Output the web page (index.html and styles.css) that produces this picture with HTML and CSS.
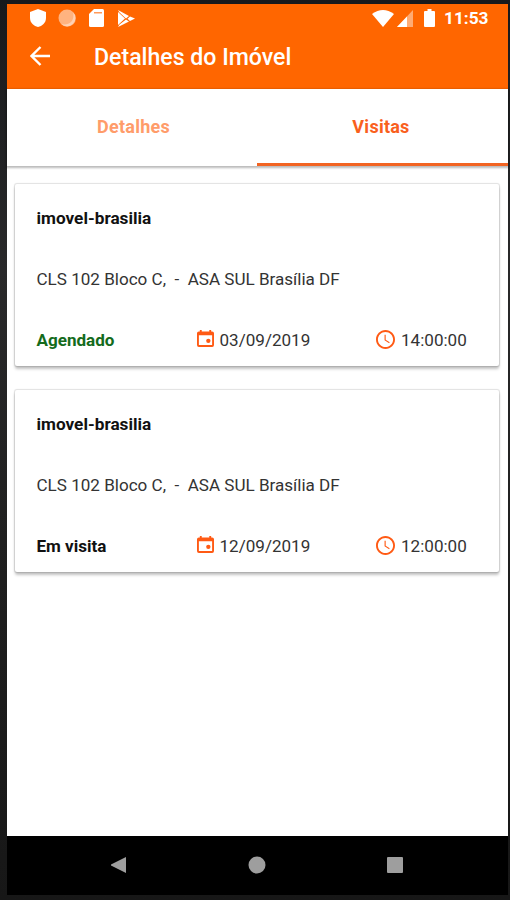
FILE: index.html
```html
<!DOCTYPE html>
<html lang="pt-BR">
<head>
<meta charset="utf-8">
<title>Detalhes do Imóvel</title>
<link rel="stylesheet" href="styles.css">
</head>
<body>
<svg class="symbols" width="0" height="0" aria-hidden="true">
  <symbol id="calendar" viewBox="0 0 18 18" preserveAspectRatio="none"><path fill-rule="evenodd" d="M3 0h2v1.500h8V0h2v1.500h1q2 0 2 2V16q0 2-2 2H2q-2 0-2-2V3.500q0-2 2-2h1zM2 5.500V16h14V5.500z"/><circle cx="12" cy="11.500" r="2.300"/></symbol>
  <symbol id="clock" viewBox="2 2 20 20"><path d="M12 2C6.500 2 2 6.500 2 12s4.500 10 10 10 10-4.500 10-10S17.500 2 12 2zm0 18c-4.400 0-8-3.600-8-8s3.600-8 8-8 8 3.600 8 8-3.600 8-8 8zm.2-13H11v5.800l4.800 3.100.6-1.100-4.200-2.600V7z"/></symbol>
</svg>
<div class="screen">
  <header class="header">
    <div class="status">
      <svg class="shield" width="16" height="18" viewBox="0 0 16 18"><path d="M8 0l8 3v6c0 5-4 8-8 9-4-1-8-4-8-9V3z"/></svg>
      <svg class="sync" width="18" height="18" viewBox="0 0 18 18"><circle cx="9" cy="9" r="8.500" opacity=".5"/><path d="M15 3a8.500 8.500 0 1 1-12 12c9 2 14-4 12-12z" opacity=".4"/></svg>
      <svg class="card-icon" width="15" height="18" viewBox="0 0 15 18"><path d="M5 0h8.500Q15 0 15 1.500v15q0 1.500-1.500 1.500h-12Q0 18 0 16.500V5z"/><path class="contacts" d="M5 3h8v1.500H5z"/></svg>
      <svg class="play" width="17" height="17" viewBox="0 0 17 17"><path d="M0 0l11 6-3 2.500L1.500 2.500zM0 2l7 6.500L0 15zM1.500 14.500L8 9.500l3 2L0 17zM12 6.500l5 2-5 2.500-2.500-2.200z"/></svg>
      <svg class="wifi" width="22" height="17" viewBox="0 0 22 17"><path d="M0 4Q11-4 22 4L11 17z"/></svg>
      <svg class="signal" width="16" height="17" viewBox="0 0 16 17"><path d="M0 17L16 0v17z" opacity=".45"/><path d="M0 17L10 6.400V17z"/></svg>
      <svg class="battery" width="11" height="18" viewBox="0 0 11 18"><path d="M3.500 0h4v2H10q1 0 1 1v14q0 1-1 1H1q-1 0-1-1V3q0-1 1-1h2.500z"/></svg>
      <span class="time">11:53</span>
    </div>
    <div class="toolbar">
      <svg class="back" width="20" height="20" viewBox="0 0 20 20"><path d="M10.500 1L1.500 10l9 9M1.500 10H20"/></svg>
      <h1 class="title">Detalhes do Imóvel</h1>
    </div>
  </header>
  <nav class="tabs">
    <span class="tab">Detalhes</span>
    <span class="tab active">Visitas</span>
  </nav>
  <main class="visits">
    <article class="card">
      <h2 class="name">imovel-brasilia</h2>
      <p class="address">CLS 102 Bloco C,&nbsp; -&nbsp; ASA SUL Brasília DF</p>
      <div class="row">
        <span class="state scheduled">Agendado</span>
        <span class="date"><svg width="17" height="17"><use href="#calendar"/></svg>03/09/2019</span>
        <span class="hour"><svg width="19" height="19"><use href="#clock"/></svg>14:00:00</span>
      </div>
    </article>
    <article class="card">
      <h2 class="name">imovel-brasilia</h2>
      <p class="address">CLS 102 Bloco C,&nbsp; -&nbsp; ASA SUL Brasília DF</p>
      <div class="row">
        <span class="state">Em visita</span>
        <span class="date"><svg width="17" height="17"><use href="#calendar"/></svg>12/09/2019</span>
        <span class="hour"><svg width="19" height="19"><use href="#clock"/></svg>12:00:00</span>
      </div>
    </article>
  </main>
  <footer class="navbar">
    <svg width="18" height="18" viewBox="0 0 18 18"><path d="M16 1v16L1 9.500v-1z"/></svg>
    <svg width="18" height="18" viewBox="0 0 18 18"><circle cx="9" cy="9" r="8.500"/></svg>
    <svg width="18" height="18" viewBox="0 0 18 18"><rect x="1" y="1" width="16" height="16" rx="1"/></svg>
  </footer>
</div>
</body>
</html>
```
FILE: styles.css
```css
* { box-sizing: border-box; }

body {
  margin: 0;
  height: 900px;
  padding: 4px 2px 5px 7px;
  background: linear-gradient(#17191c, #29292a 30%, #202020 60%, #171717);
  font-family: Roboto, sans-serif;
  font-size: 17.07px;
}

.symbols { position: absolute; }

.screen {
  display: flex;
  flex-direction: column;
  height: 891px;
  background: #fff;
}

.header {
  height: 85px;
  flex: none;
  background: #ff6600;
  color: #fff;
}

.status {
  display: flex;
  align-items: center;
  height: 28px;
  padding: 0 20px 0 23px;
}
.status svg { fill: #fff; flex: none; }
.status .contacts { fill: #ff9a5a; }
.sync { margin-left: 12px; }
.card-icon { margin-left: 13px; }
.play { margin-left: 14px; }
.wifi { margin-left: auto; }
.signal { margin-left: 3px; }
.battery { margin-left: 11px; }
.time {
  width: 44px;
  margin-left: 9px;
  font-size: 17.3px;
  font-weight: 700;
  line-height: 30px;
  white-space: nowrap;
}

.toolbar {
  display: flex;
  align-items: center;
  height: 48px;
  padding-left: 23px;
}
.back {
  fill: none;
  stroke: #fff;
  stroke-width: 2.4;
}
.title {
  margin: 3px 0 0 44px;
  font-size: 23.1px;
  font-weight: 500;
  line-height: 30px;
}

.tabs {
  display: grid;
  grid-template: 77px / 250px 1fr;
  flex: none;
  height: 77px;
  box-shadow: 0 1px 2px 1px rgba(0, 0, 0, .27);
}
.tab {
  padding-left: 3px;
  border-bottom: 3px solid transparent;
  color: #ff9c6a;
  font-size: 18px;
  font-weight: 700;
  line-height: 76px;
  letter-spacing: .25px;
  text-align: center;
}
.tab.active {
  padding: 0 3px 0 0;
  color: #f9601d;
  border-color: #f26422;
}

.visits {
  flex: 1;
  display: flex;
  flex-direction: column;
  gap: 24px;
  padding: 18px 9px 0 8px;
}
.card {
  height: 182px;
  padding: 21px 31px 0 21.5px;
  border-radius: 2px;
  background: #fff;
  box-shadow: 0 0 1px 1px rgba(0, 0, 0, .12), 0 3px 3px rgba(0, 0, 0, .24);
}
.name {
  margin: 0;
  color: #111;
  font-size: 17.2px;
  font-weight: 700;
  line-height: 26px;
}
.address {
  margin: 35px 0 35px;
  color: #333;
  line-height: 26px;
  white-space: nowrap;
}
.row {
  display: grid;
  grid-template-columns: 160px 179.5px 1fr;
  color: #333;
  line-height: 26px;
}
.state { color: #111; font-weight: 700; }
.scheduled { color: #146b1c; }
.date, .hour {
  display: flex;
  align-items: center;
  white-space: nowrap;
}
.row svg { margin-right: 6px; fill: #ff5a14; flex: none; }
.date svg { margin-bottom: 3px; }
.hour svg { margin-bottom: 1px; }

.navbar {
  display: flex;
  align-items: center;
  justify-content: space-between;
  flex: none;
  height: 59px;
  padding: 0 104px 1px 103px;
  background: #000;
}
.navbar svg { fill: #9e9e9e; }
```
